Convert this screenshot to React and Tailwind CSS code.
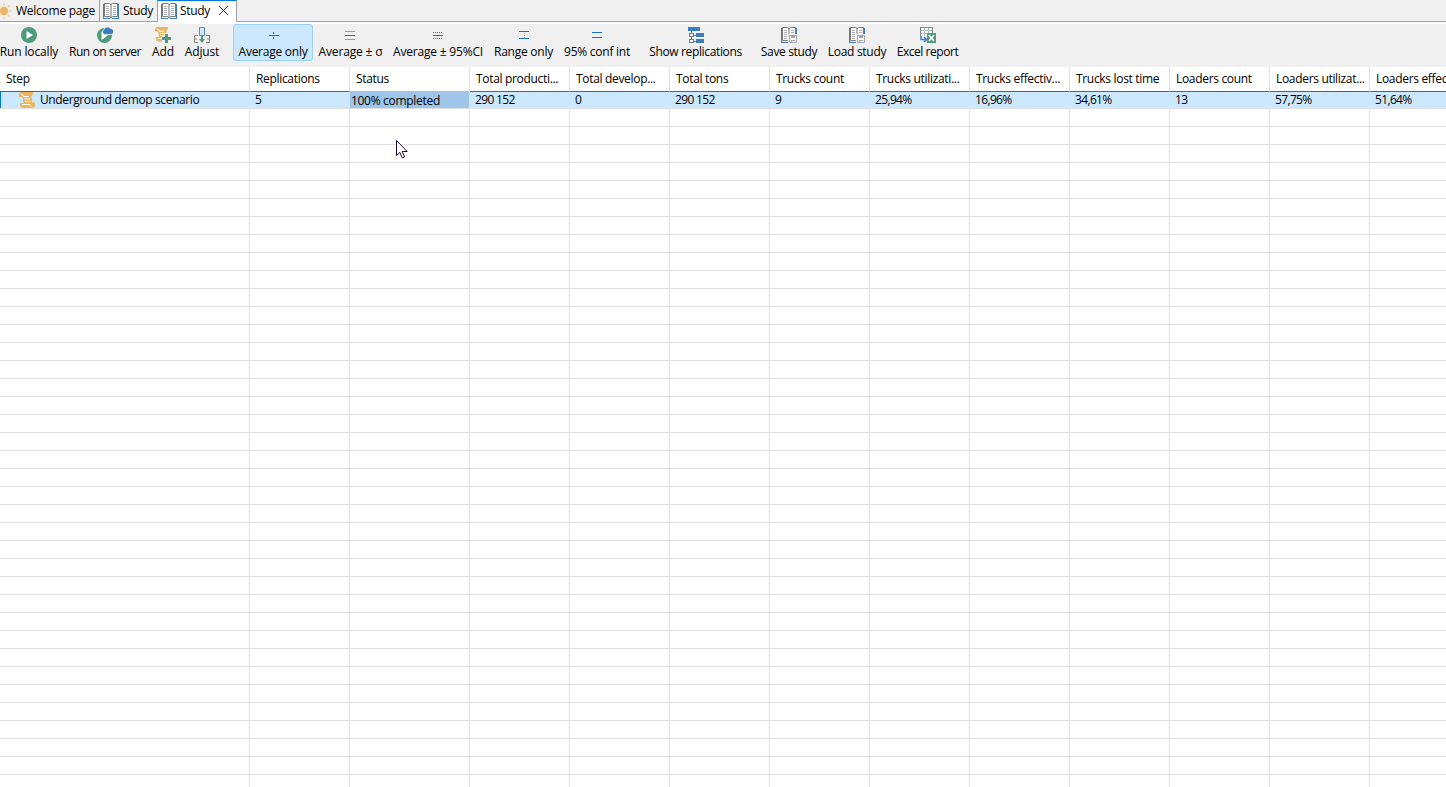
const C = 'shrink-0 block';

function SunIcon() {
  return (
    <svg className={C} width="12" height="16" viewBox="4 0 12 16">
      <g stroke="#f3cf94" strokeWidth="1.3">
        <path d="M8 0v2.500M8 13.500V16M13 8h3M11.800 4.200l2-2M11.800 11.800l2 2M4.200 4.200L3 3M4.200 11.800L3 13" />
      </g>
      <circle cx="8" cy="8" r="4.200" fill="#ecb55f" />
    </svg>
  );
}

function BookShape() {
  return (
    <>
      <path fill="#3c7fbf" d="M0 1h1v14h6v1H0zM15 1h1v15H9v-1h6z" />
      <path fill="#f8f8f8" stroke="#77797a" d="M1.5.5h5l1.5 1 1.5-1h5v13h-5L8 15l-1.5-1.5h-5z" />
      <path fill="#77797a" d="M7.5 1h1v14h-1z" />
      <path stroke="#b0b2b3" fill="none" d="M3 3.5h3M3 5.5h3M3 7.5h3M3 9.5h3M3 11.5h3M10 3.5h3M10 5.5h3M10 7.5h3M10 9.5h3M10 11.5h3" />
    </>
  );
}

function BookIcon() {
  return (
    <svg className={C} width="16" height="16" viewBox="0 0 16 16">
      <BookShape />
    </svg>
  );
}

function ScrollShape() {
  return (
    <>
      <path fill="#ecb55f" d="M2.500 0H14v2.500L12.500 4v3l1 3.500H16V13a3 3 0 0 1-3 3H4a3.500 3.500 0 0 1-3-3.500V11h3.500L3.500 5H0V2.500A2.500 2.500 0 0 1 2.500 0z" />
      <path stroke="#fff" strokeWidth="1" fill="none" d="M2 2.500h1.500l1 2H10M5.500 7H11M6 9.500h5.500M3 12.500h7.500l1.500 2" />
    </>
  );
}

function ScrollIcon() {
  return (
    <svg className={C} width="16" height="16" viewBox="0 0 16 16">
      <ScrollShape />
    </svg>
  );
}

function PlayIcon() {
  return (
    <svg className={C} width="16" height="16" viewBox="0 0 16 16">
      <circle cx="8" cy="8" r="8" fill="#4f9a7c" />
      <path fill="#fff" d="M5.500 4v8l6.500-4z" />
    </svg>
  );
}

function ServerIcon() {
  return (
    <svg className={C} width="16" height="16" viewBox="0 0 16 16">
      <circle cx="7.500" cy="8.500" r="7.500" fill="#4f9a7c" />
      <path fill="#fff" d="M4.500 4.500v8.500L12 7.500z" />
      <path fill="#3a7dbf" stroke="#f0f0f0" strokeWidth=".8" d="M7.500 7.500a2.600 2.600 0 0 1-.3-5A3.500 3.500 0 0 1 13.500 1.500a3 3 0 0 1 .5 6z" />
    </svg>
  );
}

function AddIcon() {
  return (
    <svg className={C} width="16" height="16" viewBox="0 0 16 16">
      <g transform="scale(.92)">
        <ScrollShape />
      </g>
      <path fill="#f0f0f0" d="M9 6h5v3h2v7H7V9h2z" />
      <path fill="#4f9a7c" d="M10 7h3v3h3v3h-3v3h-3v-3H7v-3h3z" />
    </svg>
  );
}

function AdjustIcon() {
  return (
    <svg className={C} width="16" height="16" viewBox="0 0 16 16">
      <path fill="#cfe6fb" stroke="#4a8ccc" d="M5.500.500h5v8h-5z" />
      <path fill="none" stroke="#85877c" d="M4 8.500H.500v7H4M12 8.500h3.500v7H12M1 12h2M13 12h2" />
      <path fill="#4f9a7c" d="M7 9h2v3h2l-3 4-3-4h2z" />
    </svg>
  );
}

function AverageIcon() {
  return (
    <svg className={C} width="16" height="16" viewBox="0 0 16 16" shapeRendering="crispEdges">
      <path fill="#1a6fc4" d="M4 8h10v1H4zM8 5h1v2H8zM8 10h1v2H8z" />
    </svg>
  );
}

function SigmaIcon() {
  return (
    <svg className={C} width="16" height="16" viewBox="0 0 16 16" shapeRendering="crispEdges">
      <path fill="#6aaae6" d="M2 4h10v1H2zM2 12h10v1H2z" />
      <path fill="#1a6fc4" d="M2 8h10v1H2z" />
    </svg>
  );
}

function ConfidenceIcon() {
  return (
    <svg className={C} width="16" height="16" viewBox="0 0 16 16" shapeRendering="crispEdges">
      <path stroke="#1a6fc4" strokeDasharray="1 1" d="M3 5.500h10M3 11.500h10" />
      <path stroke="#1a6fc4" d="M3 8.500h10" />
    </svg>
  );
}

function RangeIcon() {
  return (
    <svg className={C} width="16" height="16" viewBox="0 0 16 16" shapeRendering="crispEdges">
      <path fill="#1a6fc4" d="M3 4h10v1H3zM3 11h10v1H3z" />
      <path fill="#6aaae6" d="M8 6h1v1H8zM8 8h1v1H8zM8 10h1v1H8z" />
    </svg>
  );
}

function IntervalIcon() {
  return (
    <svg className={C} width="16" height="16" viewBox="0 0 16 16" shapeRendering="crispEdges">
      <path fill="#1a6fc4" d="M3 5h10v1H3zM3 10h10v1H3z" />
    </svg>
  );
}

function TreeIcon() {
  return (
    <svg className={C} width="16" height="16" viewBox="0 0 16 16" shapeRendering="crispEdges">
      <path fill="#3a7dbf" d="M0 0h12v4H0zM8 6h8v4H8zM8 12h8v4H8z" />
      <path fill="none" stroke="#77797a" d="M3.500 4v2M3.500 10v2M6 8.500h2M6 14.500h2" />
      <path fill="#fff" stroke="#77797a" d="M1.500 6.500h4v3h-4zM1.500 12.500h4v3h-4z" />
    </svg>
  );
}

function BookDiskIcon() {
  return (
    <svg className={C} width="16" height="16" viewBox="0 0 16 16">
      <BookShape />
      <path fill="#f0f0f0" d="M7 7h9v9H7z" />
      <path fill="#fff" stroke="#a2a4aa" d="M8.500 8.500h7v7h-7z" />
      <path fill="#a2a4aa" d="M10 9h4v2h-4zM10 13h4v1h-4zM10 14h1v1h-1z" />
    </svg>
  );
}

function ExcelIcon() {
  return (
    <svg className={C} width="16" height="16" viewBox="0 0 16 16" shapeRendering="crispEdges">
      <path fill="#fff" d="M0 0h13v9H0z" />
      <path fill="none" stroke="#a9c2b6" d="M0 3.500h13M0 6.500h13M4.500 0v9M8.500 0v9" />
      <path fill="none" stroke="#85877c" d="M.500 9V.500h12V6" />
      <path fill="#f0f0f0" d="M0 9h7v7H0z" />
      <path fill="none" stroke="#3a7dbf" strokeWidth="1.500" shapeRendering="auto" d="M1 9v3.500h5M4 10l2.500 2.500L4 15" />
      <path fill="#4f9a7c" d="M7 6h9v10H7z" />
      <path stroke="#fff" strokeWidth="1.800" shapeRendering="auto" d="M9 8l5 6M14 8l-5 6" />
    </svg>
  );
}

function Cursor() {
  return (
    <svg className="absolute left-[396px] top-[139px]" width="13" height="21" viewBox="0 0 13 21">
      <path fill="#fff" stroke="#1a0a3c" d="M.500 1.500v15l3.300-3.200 2.400 5.500 2.400-1-2.400-5.300h5z" />
    </svg>
  );
}

const tools = [
  { label: 'Run locally', icon: PlayIcon, className: '-ml-[5px] w-[68px]' },
  { label: 'Run on server', icon: ServerIcon, className: 'w-[84px] tracking-[-0.45px]' },
  { label: 'Add', icon: AddIcon, className: 'w-8' },
  { label: 'Adjust', icon: AdjustIcon, className: 'w-[46px]' },
  { label: 'Average only', icon: AverageIcon, className: 'ml-2 w-20 rounded-[3px] border border-[#99d1ff] bg-[#cce8ff] tracking-[-0.25px]' },
  { label: 'Average ± σ', icon: SigmaIcon, className: 'w-[75px]' },
  { label: 'Average ± 95%CI', icon: ConfidenceIcon, className: 'w-[100px] tracking-[-0.2px]' },
  { label: 'Range only', icon: RangeIcon, className: 'w-[71px] tracking-[-0.25px]' },
  { label: '95% conf int', icon: IntervalIcon, className: 'w-[76px] tracking-[-0.25px]' },
  { label: 'Show replications', icon: TreeIcon, className: 'ml-2 w-[105px] tracking-[-0.35px]' },
  { label: 'Save study', icon: BookDiskIcon, className: 'ml-[7px] w-[68px] tracking-[-0.35px]' },
  { label: 'Load study', icon: BookDiskIcon, className: 'w-[68px] tracking-[-0.3px]' },
  { label: 'Excel report', icon: ExcelIcon, className: 'w-[73px] tracking-[-0.45px]' },
];

const columns = [
  { title: 'Step', width: 'w-[250px]' },
  { title: 'Replications', value: '5', width: 'w-[100px]' },
  { title: 'Status', width: 'w-[120px]' },
  { title: 'Total producti...', value: '290 152', width: 'w-[100px]' },
  { title: 'Total develop...', value: '0', width: 'w-[100px]' },
  { title: 'Total tons', value: '290 152', width: 'w-[100px]' },
  { title: 'Trucks count', value: '9', width: 'w-[100px]' },
  { title: 'Trucks utilizati...', value: '25,94%', width: 'w-[100px]' },
  { title: 'Trucks effectiv...', value: '16,96%', width: 'w-[100px]' },
  { title: 'Trucks lost time', value: '34,61%', width: 'w-[100px]' },
  { title: 'Loaders count', value: '13', width: 'w-[100px]' },
  { title: 'Loaders utilizat...', value: '57,75%', width: 'w-[100px]' },
  { title: 'Loaders effectiv...', value: '51,64%', width: 'w-[100px]' },
];

const emptyRows = Array.from({ length: 38 }, (_, i) => i);

function Tabs() {
  return (
    <div className="flex h-[22px] shrink-0">
      <div className="flex w-[99px] items-center border-b border-[#a0a0a0] tracking-[-0.25px]">
        <SunIcon />
        <span className="ml-1">Welcome page</span>
      </div>
      <div className="flex w-[58px] items-center border-b border-l border-[#a0a0a0] pl-[3px] tracking-[-0.3px]">
        <BookIcon />
        <span className="ml-1">Study</span>
      </div>
      <div className="flex w-20 items-center border-x border-t border-x-[#a0a0a0] border-t-[#0078d7] bg-white pb-0.5 pl-[3px] tracking-[-0.3px]">
        <BookIcon />
        <span className="ml-[3px] w-[31px]">Study</span>
        <svg className="ml-2 shrink-0" width="9" height="9" viewBox="0 0 9 9">
          <path stroke="#333" d="M0 0l9 9M9 0L0 9" />
        </svg>
      </div>
      <div className="flex-1 border-b border-[#a0a0a0]" />
    </div>
  );
}

function Toolbar() {
  return (
    <div className="flex h-[43px] shrink-0 items-start">
      {tools.map(({ label, icon: Icon, className }) => (
        <div key={label} className={`flex h-[37px] shrink-0 flex-col items-center ${className.includes('border') ? 'pt-[2px]' : 'pt-[3px]'} ${className}`}>
          <Icon />
          <span className="leading-[18px]">{label}</span>
        </div>
      ))}
    </div>
  );
}

function Table() {
  return (
    <div className="flex-1 overflow-hidden bg-white">
      {/* Header */}
      <div className="flex h-6 w-[1570px] tracking-[-0.32px]">
        {columns.map((c) => (
          <div key={c.title} className={`${c.width} shrink-0 border-r border-[#e0e0e0] pl-1.5 leading-6`}>
            {c.title}
          </div>
        ))}
      </div>

      {/* Selected row */}
      <div className="flex h-[18px] w-[1570px] border-b border-[#e0e0e0] bg-[#cce8ff] leading-4">
        {columns.map((c) => {
          if (c.title === 'Step') {
            return (
              <div key={c.title} className={`${c.width} flex shrink-0 border-l border-r border-t border-l-[#0078d7] border-r-[#e0e0e0] border-t-[#0078d7] pl-[18px] tracking-[-0.38px]`}>
                <ScrollIcon />
                <span className="ml-[5px]">Underground demop scenario</span>
              </div>
            );
          }
          if (c.title === 'Status') {
            return (
              <div key={c.title} className={`${c.width} shrink-0 border-r border-[#e0e0e0] bg-[#9fc5ea] pl-px leading-[19px] tracking-[-0.3px]`}>
                100% completed
              </div>
            );
          }
          return (
            <div key={c.title} className={`${c.width} shrink-0 border-r border-t border-r-[#e0e0e0] border-t-[#0078d7] pl-[5px] tracking-[-0.65px]`}>
              {c.value}
            </div>
          );
        })}
      </div>

      {emptyRows.map((i) => (
        <div key={i} className="flex h-[18px] w-[1570px] border-b border-[#e0e0e0]">
          {columns.map((c) => (
            <div key={c.title} className={`${c.width} shrink-0 border-r border-[#e0e0e0]`} />
          ))}
        </div>
      ))}
    </div>
  );
}

export default function App() {
  return (
    <div className="relative flex h-[787px] w-[1446px] flex-col overflow-hidden whitespace-nowrap bg-[#f0f0f0] font-['Open_Sans','Noto_Sans',sans-serif] text-[12px] leading-4 tracking-[-0.15px] text-black">
      <Tabs />
      <div className="h-0.5 shrink-0 bg-white" />
      <Toolbar />
      <Table />
      <Cursor />
    </div>
  );
}
